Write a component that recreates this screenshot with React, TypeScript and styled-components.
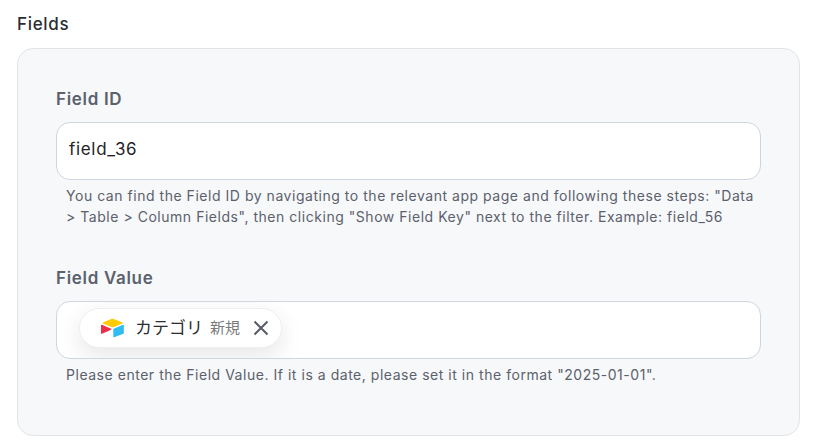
import React from "react";
import styled, { createGlobalStyle, css } from "styled-components";

const GlobalStyle = createGlobalStyle`
  * { box-sizing: border-box; }
  body { margin: 0; background: #fff; font-family: Inter, "Noto Sans CJK JP", sans-serif; color: #2a2d33; }
`;
const heading = css`
  font-size: 17px;
  line-height: 24px;
  letter-spacing: 0.04em;
`;
const Section = styled.section`
  padding: 12px 19px 10px 17px;
`;
const Title = styled.h2`
  ${heading}
  margin: 0 0 12px;
  font-weight: 500;
`;
const Panel = styled.div`
  display: flex;
  flex-direction: column;
  gap: 39px;
  padding: 38px 38px 50px;
  border: 1px solid #e2e4e7;
  border-radius: 16px;
  background: #f7f8fa;
`;
const Field = styled.div`
  display: flex;
  flex-direction: column;
`;
const Label = styled.label`
  ${heading}
  margin-bottom: 11px;
  font-weight: 600;
  color: #5b616c;
`;
const boxed = css`
  width: 100%;
  height: 58px;
  border: 1px solid #cfd5de;
  border-radius: 14px;
  background: #fff;
`;
const TextInput = styled.input`
  ${boxed}
  padding: 0 12px 4px;
  font: 400 17px Inter, sans-serif;
  letter-spacing: 0.04em;
  color: #1f2329;
  outline: none;
`;
const TokenBox = styled.div`
  ${boxed}
  display: flex;
  align-items: center;
  padding: 0 22px 4px;
  overflow: hidden;
`;
const Hint = styled.p`
  margin: 5px 0 0;
  padding: 0 0 0 10px;
  font-size: 14px;
  line-height: 21px;
  letter-spacing: 0.038em;
  color: #5b616c;
`;
const Chip = styled.span`
  display: flex;
  align-items: center;
  height: 40px;
  padding: 0 12px 0 20px;
  border: 1px solid #eceef1;
  border-radius: 20px;
  background: #fff;
  box-shadow: 0 8px 24px rgba(0, 0, 0, 0.1);
`;
const ChipName = styled.span`
  margin: 0 7px 0 10px;
  font-size: 17px;
  line-height: 24px;
`;
const ChipTag = styled.span`
  font-size: 15px;
  line-height: 24px;
  color: #7a7a7a;
`;
const Remove = styled.button`
  display: flex;
  margin-left: 13px;
  padding: 0;
  border: 0;
  background: none;
  color: #565c67;
`;

export default function App() {
  return (
    <>
      <GlobalStyle />
      <Section>
        <Title>Fields</Title>
        <Panel>
          <Field>
            <Label htmlFor="field-id">Field ID</Label>
            <TextInput id="field-id" defaultValue="field_36" />
            <Hint>
              You can find the Field ID by navigating to the relevant app page and following these steps: "Data &gt; Table &gt; Column Fields", then clicking "Show Field Key" next to the filter. Example: field_56
            </Hint>
          </Field>
          <Field>
            <Label as="span" id="field-value">Field Value</Label>
            <TokenBox role="group" aria-labelledby="field-value">
              <Chip>
                <svg width="25" height="20" viewBox="0 0 25 20" aria-hidden="true">
                  <path fill="#ffcb05" d="M11.300 1 2.800 4.500c-.5.2-.5.800 0 1l8.600 3.500c.8.3 1.700.3 2.500 0l8.600-3.500c.5-.2.5-.8 0-1L13.900 1a3.500 3.500 0 0 0-2.600 0Z" />
                  <path fill="#2fbdf1" d="M13.300 11.400v7.400c0 .4.400.700.800.500l9.300-3.600a.600.600 0 0 0 .400-.600V7.200c0-.400-.400-.700-.800-.500l-9.300 4.100a.600.600 0 0 0-.400.600Z" />
                  <path fill="#ed3049" d="m11.300 11.500-2.800 1.400-6.600 2.900c-.400.200-.900-.100-.900-.600V7.300c0-.500.500-.800 1-.600l9.200 4.100c.4.200.4.500.1.700Z" />
                </svg>
                <ChipName>カテゴリ</ChipName>
                <ChipTag>新規</ChipTag>
                <Remove type="button" aria-label="Remove">
                  <svg width="16" height="16" viewBox="0 0 16 16" fill="none" stroke="currentColor" strokeWidth="2">
                    <path d="m1.500 1.500 13 13m0-13-13 13" />
                  </svg>
                </Remove>
              </Chip>
            </TokenBox>
            <Hint>Please enter the Field Value. If it is a date, please set it in the format "2025-01-01".</Hint>
          </Field>
        </Panel>
      </Section>
    </>
  );
}
